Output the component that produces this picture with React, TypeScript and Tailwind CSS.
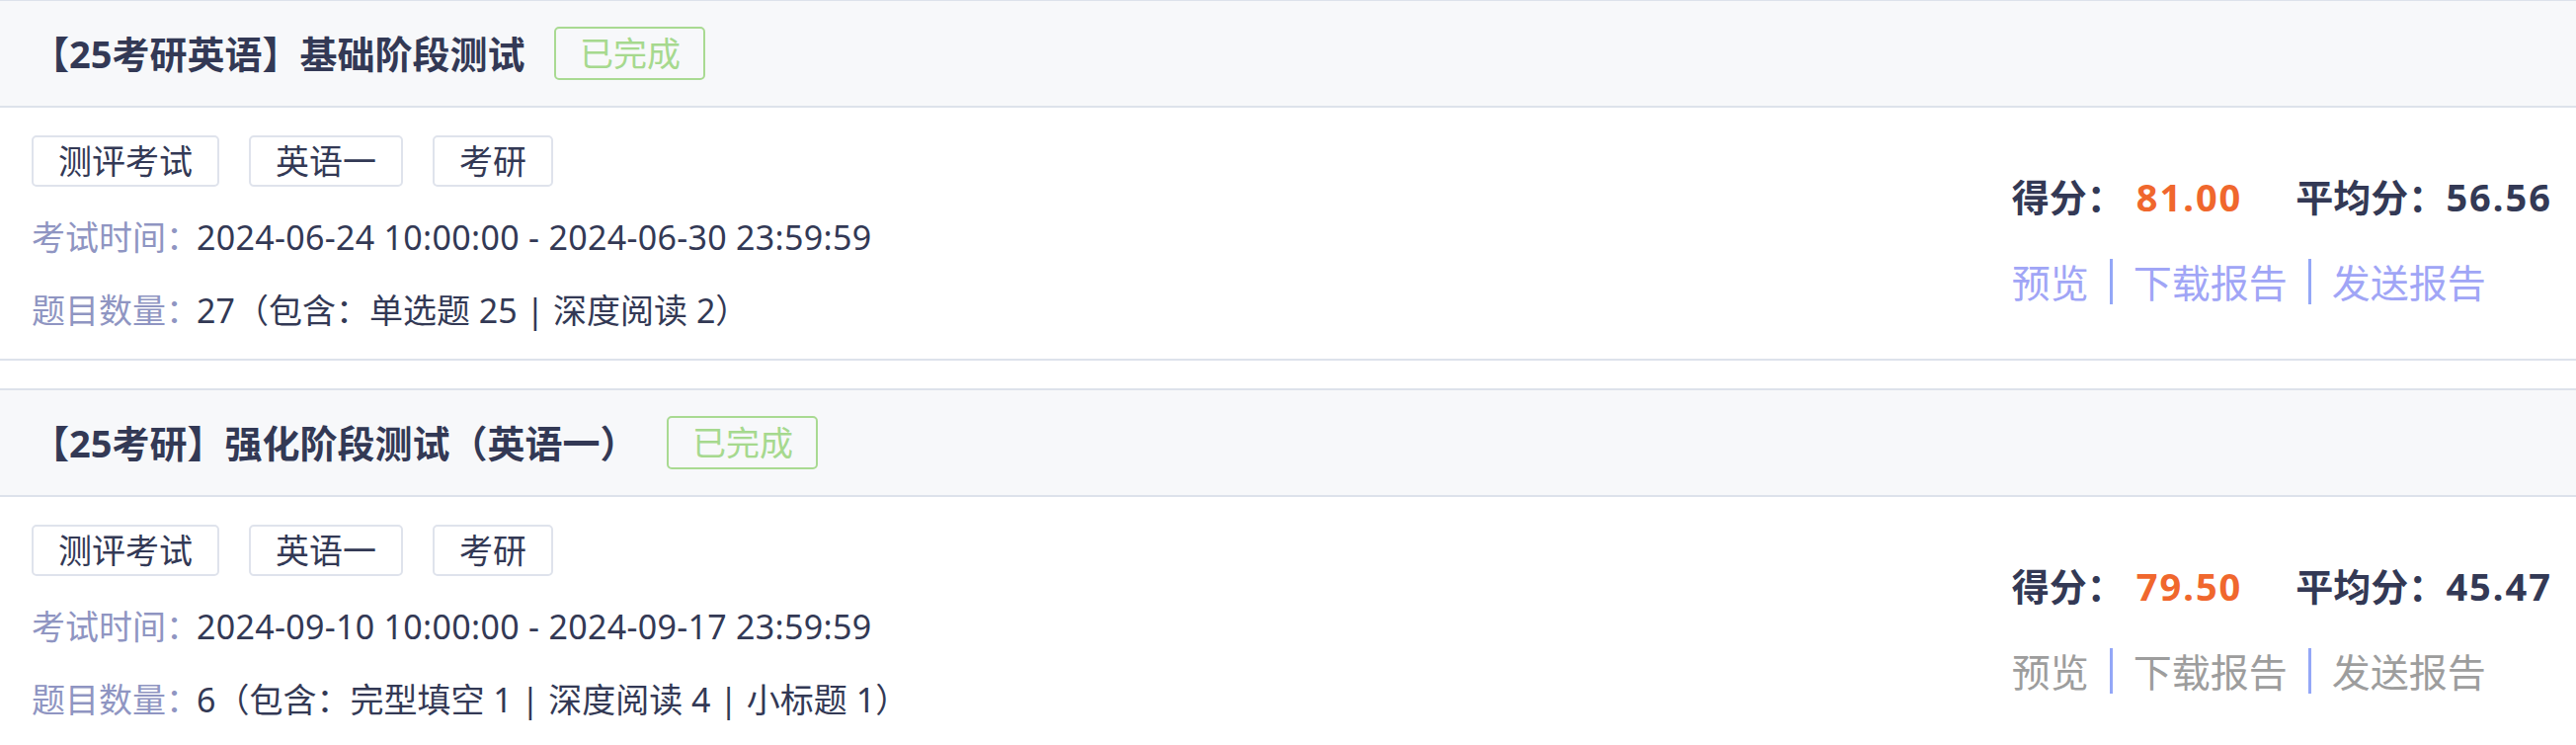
import React from 'react';

type Exam = {
  title: string;
  tags: string[];
  time: string;
  count: string;
  score: string;
  avg: string;
  active: boolean;
};

const exams: Exam[] = [
  {
    title: '【25考研英语】基础阶段测试',
    tags: ['测评考试', '英语一', '考研'],
    time: '2024-06-24 10:00:00 - 2024-06-30 23:59:59',
    count: '27（包含：单选题 25 | 深度阅读 2）',
    score: '81.00',
    avg: '56.56',
    active: true,
  },
  {
    title: '【25考研】强化阶段测试（英语一）',
    tags: ['测评考试', '英语一', '考研'],
    time: '2024-09-10 10:00:00 - 2024-09-17 23:59:59',
    count: '6（包含：完型填空 1 | 深度阅读 4 | 小标题 1）',
    score: '79.50',
    avg: '45.47',
    active: false,
  },
];

const ExamCard: React.FC<{ exam: Exam }> = ({ exam }) => {
  const linkColor = exam.active ? 'text-[#a0a5f6]' : 'text-[#9d9d9d]';
  return (
    <div className="border-y-2 border-[#dde2eb]">
      <div className="h-[108px] bg-[#f7f8fa] border-b-2 border-[#dde2eb] flex items-center pl-[32px]">
        <span className="text-[38px] font-bold leading-none text-[#333955]">{exam.title}</span>
        <span className="ml-[30px] h-[54px] w-[153px] flex items-center justify-center rounded-[5px] border-2 border-[#a9da92] text-[34px] leading-none text-[#a6d98e]">
          已完成
        </span>
      </div>
      <div className="flex justify-between bg-white">
        <div className="pl-[32px] pt-[28px] pb-[27px]">
          <div className="flex gap-[30px]">
            {exam.tags.map((t) => (
              <span
                key={t}
                className="h-[52px] px-[25px] flex items-center rounded-[5px] border-2 border-[#dfe3ec] text-[34px] leading-none text-[#333955]"
              >
                {t}
              </span>
            ))}
          </div>
          <div className="mt-[29px] text-[34px] leading-[44px] text-[#333955]">
            <span className="text-[#8f95c2] -mr-[3px]">考试时间：</span>
            <span className="tracking-[0.3px]">{exam.time}</span>
          </div>
          <div className="mt-[30px] text-[34px] leading-[44px] text-[#333955]">
            <span className="text-[#8f95c2] -mr-[3px]">题目数量：</span>
            {exam.count}
          </div>
        </div>
        <div className="pt-[66px] pr-[24px]">
          <div className="h-[48px] flex items-center text-[38px] font-bold leading-none text-[#333955]">
            <span>得分：</span>
            <span className="ml-[12px] tracking-[2px] text-[#f0672d]">{exam.score}</span>
            <span className="ml-[54px]">平均分：</span>
            <span className="tracking-[2px]">{exam.avg}</span>
          </div>
          <div className={`mt-[38px] h-[48px] flex items-center text-[39px] leading-none ${linkColor}`}>
            <span>预览</span>
            <span className="mx-[21px] w-[3px] h-[46px] bg-[#94a7f7]" />
            <span>下载报告</span>
            <span className="mx-[21px] w-[3px] h-[46px] bg-[#94a7f7]" />
            <span>发送报告</span>
          </div>
        </div>
      </div>
    </div>
  );
};

export default function App() {
  return (
    <div
      className="min-h-screen bg-white -mt-px flex flex-col gap-[28px]"
      style={{ fontFamily: '"Noto Sans", "Noto Sans CJK SC", sans-serif' }}
    >
      {exams.map((e) => (
        <ExamCard key={e.title} exam={e} />
      ))}
    </div>
  );
}
